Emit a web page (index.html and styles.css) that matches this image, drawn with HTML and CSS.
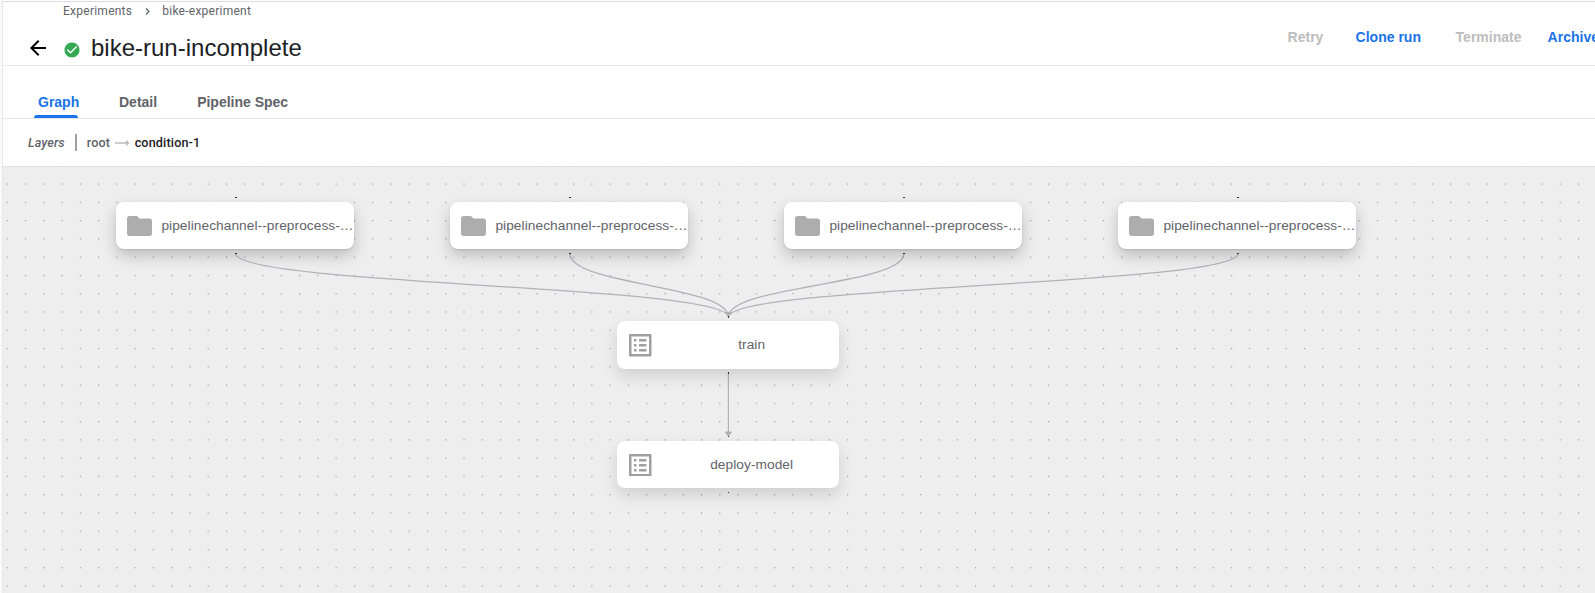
FILE: index.html
```html
<!DOCTYPE html>
<html lang="en">
<head>
<meta charset="utf-8">
<title>bike-run-incomplete</title>
<link rel="stylesheet" href="styles.css">
</head>
<body>
<main class="page">
  <header class="toolbar">
    <div class="heading">
      <nav class="crumbs"><span>Experiments</span><svg class="chevron" width="5" height="7" viewBox="0 0 5 7"><path d="M1 .5 4 3.500 1 6.500"/></svg><span>bike-experiment</span></nav>
      <div class="title-row">
        <svg class="back" width="16" height="16" viewBox="4 4 16 16"><path d="M20 11H7.830l5.590-5.590L12 4l-8 8 8 8 1.410-1.410L7.830 13H20v-2z"/></svg>
        <svg class="status" width="18" height="18" viewBox="0 0 24 24"><path d="M12 2C6.480 2 2 6.480 2 12s4.480 10 10 10 10-4.480 10-10S17.520 2 12 2zm-2 15l-5-5 1.410-1.410L10 14.170l7.590-7.590L19 8l-9 9z"/></svg>
        <h1 class="title">bike-run-incomplete</h1>
      </div>
    </div>
    <div class="actions">
      <span class="action off retry">Retry</span>
      <span class="action clone">Clone run</span>
      <span class="action off terminate">Terminate</span>
      <span class="action archive">Archive</span>
    </div>
  </header>
  <nav class="tabs">
    <span class="tab active">Graph</span>
    <span class="tab detail">Detail</span>
    <span class="tab spec">Pipeline Spec</span>
  </nav>
  <div class="layers">
    <span class="layers-label">Layers</span>
    <span class="divider"></span>
    <span class="root">root</span>
    <svg class="arrow" width="15" height="8" viewBox="0 0 15 8"><path d="M0 3.250h11V.8L14.500 4 11 7.200V4.750H0z"/></svg>
    <span class="current">condition-1</span>
  </div>
  <section class="canvas">
    <svg class="edges" width="1592" height="426" viewBox="3 167 1592 426">
      <defs>
        <pattern id="dots" x="6.700" y="183.500" width="18.270" height="18.270" patternUnits="userSpaceOnUse"><circle cx=".609" cy=".609" r=".609" fill="#81818a"/></pattern>
      </defs>
      <rect x="3" y="167" width="1592" height="426" fill="url(#dots)"/>
      <g class="lines">
        <path d="M235.700 253.500C235.700 285.300 728.400 285.300 728.400 317"/>
        <path d="M569.800 253.500C569.800 285.300 728.400 285.300 728.400 317"/>
        <path d="M903.900 253.500C903.900 285.300 728.400 285.300 728.400 317"/>
        <path d="M1237.900 253.500C1237.900 285.300 728.400 285.300 728.400 317"/>
        <path d="M728.400 373V436"/>
      </g>
      <path class="head" d="M725.200 312.500h6.400l-3.200 4zM725.200 432h6.400l-3.200 4z"/>
      <path class="ports" d="M235 197h2v1h-2zM569 197h2v1h-2zM903 197h2v1h-2zM1237 197h2v1h-2zM235 253h2v1h-2zM569 253h2v1h-2zM903 253h2v1h-2zM1237 253h2v1h-2zM728 316h1v2h-1zM728 372h1v2h-1zM728 436h1v1h-1zM728 492h1v1h-1z"/>
    </svg>
    <div class="node folder n1"><svg class="folder-icon" viewBox="2 4 20 16"><path d="M10 4H4c-1.100 0-2 .9-2 2v12c0 1.100.9 2 2 2h16c1.100 0 2-.9 2-2V8c0-1.100-.9-2-2-2h-8l-2-2z"/></svg><span class="name">pipelinechannel--preprocess-…</span></div>
    <div class="node folder n2"><svg class="folder-icon" viewBox="2 4 20 16"><path d="M10 4H4c-1.100 0-2 .9-2 2v12c0 1.100.9 2 2 2h16c1.100 0 2-.9 2-2V8c0-1.100-.9-2-2-2h-8l-2-2z"/></svg><span class="name">pipelinechannel--preprocess-…</span></div>
    <div class="node folder n3"><svg class="folder-icon" viewBox="2 4 20 16"><path d="M10 4H4c-1.100 0-2 .9-2 2v12c0 1.100.9 2 2 2h16c1.100 0 2-.9 2-2V8c0-1.100-.9-2-2-2h-8l-2-2z"/></svg><span class="name">pipelinechannel--preprocess-…</span></div>
    <div class="node folder n4"><svg class="folder-icon" viewBox="2 4 20 16"><path d="M10 4H4c-1.100 0-2 .9-2 2v12c0 1.100.9 2 2 2h16c1.100 0 2-.9 2-2V8c0-1.100-.9-2-2-2h-8l-2-2z"/></svg><span class="name">pipelinechannel--preprocess-…</span></div>
    <div class="node task n5"><svg class="task-icon" viewBox="3 3 18 18"><path d="M19 5v14H5V5h14m1.100-2H3.900c-.5 0-.9.4-.9.9v16.200c0 .4.4.9.9.9h16.200c.4 0 .9-.5.9-.9V3.900c0-.5-.5-.9-.9-.9zM11 7h6v2h-6V7zm0 4h6v2h-6v-2zm0 4h6v2h-6zM7 7h2v2H7zm0 4h2v2H7zm0 4h2v2H7z"/></svg><span class="name">train</span></div>
    <div class="node task n6"><svg class="task-icon" viewBox="3 3 18 18"><path d="M19 5v14H5V5h14m1.100-2H3.900c-.5 0-.9.4-.9.9v16.200c0 .4.4.9.9.9h16.200c.4 0 .9-.5.9-.9V3.900c0-.5-.5-.9-.9-.9zM11 7h6v2h-6V7zm0 4h6v2h-6v-2zm0 4h6v2h-6zM7 7h2v2H7zm0 4h2v2H7zm0 4h2v2H7z"/></svg><span class="name">deploy-model</span></div>
  </section>
</main>
</body>
</html>
```
FILE: styles.css
```css
* { box-sizing: border-box; }
body { margin: 0; background: #fff; font-family: "Liberation Sans", Arial, sans-serif; color: #202124; overflow: hidden; }
svg { display: block; flex: none; }
.page { width: 1595px; height: 593px; padding-top: 1px; border-left: 2px solid #f8fafb; overflow: hidden; }
.toolbar { height: 65px; border-top: 1px solid #dadce0; border-bottom: 1px solid #e8eaed; border-left: 1px solid #e4e7eb; display: flex; justify-content: space-between; overflow: hidden; }
.crumbs { display: flex; align-items: center; height: 18px; padding-left: 60px; font: 12px/18px Roboto, sans-serif; color: #5f6368; letter-spacing: .25px; }
.chevron { margin: 1px 12.500px 0 12.500px; fill: none; stroke: #5f6368; stroke-width: 1.200; }
.title-row { display: flex; align-items: center; height: 44px; padding: 12px 0 0 27px; }
.back { margin-top: -1px; fill: #000; }
.status { margin: 3px 10px 0 17px; fill: #34a853; }
.title { margin: 0; font-size: 24px; line-height: 28px; font-weight: 400; white-space: nowrap; }
.actions { display: flex; padding-top: 26px; width: 307.400px; }
.action { flex: none; font-size: 14px; line-height: 18px; font-weight: 700; color: #1a73e8; white-space: nowrap; }
.off { color: #bdbdbd; }
.retry { width: 68px; }
.clone { width: 100px; }
.terminate { width: 92px; }
.tabs { height: 53px; border-bottom: 1px solid #e4e6e9; border-left: 1px solid #e4e7eb; display: flex; padding: 17px 0 0 31px; font-size: 14px; font-weight: 700; line-height: 38px; color: #5f6368; }
.tab { flex: none; height: 35px; padding-left: 4px; white-space: nowrap; }
.active { width: 45px; margin-right: 36px; color: #1a73e8; position: relative; }
.active::after { content: ""; position: absolute; left: 0; bottom: 0; width: 44px; height: 3px; border-radius: 3px 3px 0 0; background: #1a73e8; }
.detail { margin-right: 36px; }
.layers { height: 48px; border-bottom: 1px solid #e0e0e0; border-left: 1px solid #e4e7eb; display: flex; align-items: center; padding-left: 25px; font: 500 12.600px/16px Roboto, sans-serif; color: #5f6368; }
.layers-label { font-style: italic; letter-spacing: .1px; }
.divider { width: 2px; height: 17px; margin: 0 10px; background: #9aa0a6; }
.root { letter-spacing: .15px; }
.arrow { margin: 1px 5px 0 4.500px; fill: #bdbdbd; }
.current { color: #202124; letter-spacing: .15px; }
.canvas { position: relative; height: 426px; border-left: 1px solid #e4e7eb; background: #eee; overflow: hidden; }
.edges { position: absolute; left: 0; top: 0; }
.lines { fill: none; stroke: #b1b1b7; stroke-width: 1.218; }
.head { fill: #b1b1b7; stroke: #b1b1b7; stroke-width: 1; stroke-linejoin: round; }
.ports { fill: #333; }
.node { position: absolute; display: flex; align-items: center; height: 47.500px; border-radius: 8px; background: #fff; color: #5f6368; font-size: 13.700px; line-height: 20px; letter-spacing: .07px; box-shadow: 0 7px 16px rgba(0,0,0,.13); }
.folder { top: 35px; height: 47px; width: 237.600px; padding-left: 11px; box-shadow: 0 1px 2px rgba(0,0,0,.1), 0 7px 15px rgba(0,0,0,.2); }
.folder-icon { width: 25px; height: 20px; margin-top: 1px; fill: #adadad; }
.folder .name { margin: 0 0 0 9px; white-space: nowrap; }
.task { width: 222px; padding-left: 12px; }
.task-icon { width: 22.500px; height: 22.500px; margin-top: 1px; fill: #a0a0a0; }
.task .name { flex: 1; margin-top: -1px; padding-left: 12px; text-align: center; }
.n1 { left: 113.400px; }
.n2 { left: 447.400px; }
.n3 { left: 781.400px; }
.n4 { left: 1115.400px; }
.n5 { left: 614.400px; top: 154.400px; }
.n6 { left: 614.400px; top: 273.800px; }
.n6 .name { margin-top: 0; }
```
